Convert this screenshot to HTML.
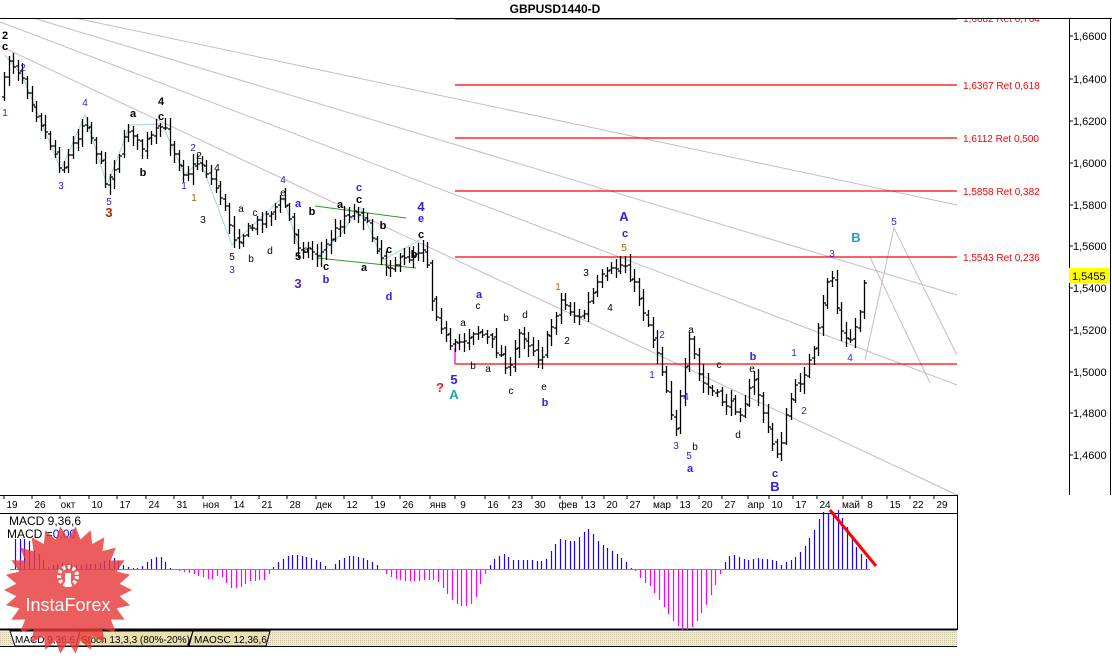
<!DOCTYPE html>
<html><head><meta charset="utf-8"><style>
html,body{margin:0;padding:0;background:#fff;width:1112px;height:661px;overflow:hidden}
svg{display:block;font-family:"Liberation Sans",sans-serif}
</style></head><body>
<svg id="s" width="1112" height="661" viewBox="0 0 1112 661" xmlns="http://www.w3.org/2000/svg">
<rect width="1112" height="661" fill="#fff"/>
<text x="555" y="13" font-size="12" font-weight="bold" text-anchor="middle">GBPUSD1440-D</text>
<line x1="0" y1="18.5" x2="1112" y2="18.5" stroke="#000"/>
<line x1="1110.5" y1="18" x2="1110.5" y2="495" stroke="#000"/>
<line x1="1069.5" y1="18" x2="1069.5" y2="495" stroke="#000"/>
<g stroke="#cbb8cb" stroke-width="1" fill="none">
<line x1="33" y1="18" x2="957" y2="295"/>
<line x1="0" y1="22" x2="957" y2="385"/>
<line x1="0" y1="46" x2="957" y2="495"/>
<line x1="75" y1="18" x2="957" y2="205"/>
<polyline points="865,360 894,228 957,355"/>
<line x1="870" y1="257" x2="930" y2="383"/>
</g>
<g stroke="#9fd6df" fill="none">
<polyline points="5,55 22,75 61,170 85,115 107,185 130,125 162,124 185,175 200,160 232,245 283,197 298,245"/>
<polyline points="316,258 340,235 360,207 383,260 420,240 421,238"/>
</g>
<g stroke="#2a9a2a" fill="none"><line x1="315" y1="206" x2="406" y2="218"/><line x1="317" y1="258" x2="416" y2="268"/></g>
<g stroke="#f00" stroke-width="1.3">
<line x1="455" y1="19" x2="957" y2="19"/><line x1="455" y1="85" x2="957" y2="85"/>
<line x1="455" y1="138" x2="957" y2="138"/><line x1="455" y1="191" x2="957" y2="191"/>
<line x1="455" y1="257" x2="957" y2="257"/><line x1="455" y1="364" x2="957" y2="364"/>
</g>
<line x1="455" y1="348" x2="455" y2="364" stroke="#e0e" stroke-width="1.3"/>
<g fill="#f00" font-size="10">
<text x="963" y="22">1,6682 Ret 0,764</text><text x="963" y="89">1,6367 Ret 0,618</text>
<text x="963" y="142">1,6112 Ret 0,500</text><text x="963" y="195">1,5858 Ret 0,382</text>
<text x="963" y="261">1,5543 Ret 0,236</text>
</g>
<rect x="0" y="18" width="1112" height="1" fill="#000"/>
<rect x="940" y="0" width="172" height="18" fill="#fff"/>
<g id="bars" stroke="#000" stroke-width="1.3" fill="none"></g>
<g font-size="10" text-anchor="middle">
<g fill="#000" font-weight="bold" font-size="11"><text x="5" y="39">2</text><text x="5" y="50">c</text><text x="133" y="117">a</text><text x="161" y="105">4</text><text x="161" y="120">c</text><text x="143" y="176">b</text><text x="359" y="203">c</text><text x="421" y="238">c</text><text x="414" y="258">b</text><text x="298" y="260">5</text><text x="312" y="215">b</text><text x="340" y="208">a</text><text x="383" y="229">b</text><text x="364" y="271">a</text><text x="389" y="253">c</text><text x="326" y="270">c</text></g>
<g fill="#000"><text x="217" y="171">4</text><text x="203" y="223">3</text><text x="241" y="212">a</text><text x="255" y="216">c</text><text x="283" y="196">e</text><text x="270" y="254">d</text><text x="232" y="260">5</text><text x="251" y="262">b</text><text x="306" y="253">a</text><text x="463" y="326">a</text><text x="478" y="309">c</text><text x="506" y="321">b</text><text x="525" y="318">d</text><text x="473" y="369">b</text><text x="488" y="372">a</text><text x="511" y="394">c</text><text x="544" y="390">e</text><text x="567" y="344">2</text><text x="610" y="311">4</text><text x="691" y="333">a</text><text x="695" y="450">b</text><text x="719" y="368">c</text><text x="752" y="372">e</text><text x="738" y="438">d</text><text x="199" y="159">2</text><text x="586" y="276">3</text></g>
<g fill="#b06000"><text x="194" y="201">1</text><text x="558" y="290">1</text><text x="624" y="251">5</text></g>
<g fill="#3020e0"><text x="5" y="116">1</text><text x="23" y="71">2</text><text x="85" y="106">4</text><text x="61" y="189">3</text><text x="109" y="205">5</text><text x="193" y="151">2</text><text x="184" y="189">1</text><text x="283" y="183">4</text><text x="232" y="273">3</text><text x="652" y="378">1</text><text x="662" y="338">2</text><text x="686" y="400">4</text><text x="676" y="449">3</text><text x="689" y="459">5</text><text x="794" y="356">1</text><text x="804" y="414">2</text><text x="832" y="257">3</text><text x="850" y="361">4</text><text x="894" y="225">5</text></g>
<g fill="#3020e0" font-weight="bold" font-size="11"><text x="298" y="207">a</text><text x="359" y="191">c</text><text x="326" y="283">b</text><text x="389" y="300">d</text><text x="421" y="222">e</text><text x="479" y="298">a</text><text x="545" y="406">b</text><text x="625" y="237">c</text><text x="690" y="472">a</text><text x="753" y="360">b</text><text x="775" y="477">c</text></g>
<g font-weight="bold" font-size="13"><text x="109" y="217" fill="#a03000">3</text><text x="298" y="288" fill="#6020a0">3</text><text x="421" y="211" fill="#3020e0">4</text><text x="454" y="384" fill="#3020e0">5</text><text x="440" y="392" fill="#e02020">?</text><text x="454" y="399" fill="#20a0c0">A</text><text x="624" y="221" fill="#3020e0">A</text><text x="775" y="491" fill="#3020e0">B</text><text x="856" y="242" fill="#20a0c0">B</text></g>
</g>
<g font-size="11" fill="#000">
<g stroke="#000"><line x1="1069" y1="36" x2="1073" y2="36"/><line x1="1069" y1="79" x2="1073" y2="79"/><line x1="1069" y1="121" x2="1073" y2="121"/><line x1="1069" y1="163" x2="1073" y2="163"/><line x1="1069" y1="205" x2="1073" y2="205"/><line x1="1069" y1="246" x2="1073" y2="246"/><line x1="1069" y1="288" x2="1073" y2="288"/><line x1="1069" y1="330" x2="1073" y2="330"/><line x1="1069" y1="372" x2="1073" y2="372"/><line x1="1069" y1="413" x2="1073" y2="413"/><line x1="1069" y1="455" x2="1073" y2="455"/></g>
<text x="1073" y="40">1,6600</text><text x="1073" y="83">1,6400</text><text x="1073" y="125">1,6200</text><text x="1073" y="167">1,6000</text><text x="1073" y="209">1,5800</text><text x="1073" y="250">1,5600</text><text x="1073" y="292">1,5400</text><text x="1073" y="334">1,5200</text><text x="1073" y="376">1,5000</text><text x="1073" y="417">1,4800</text><text x="1073" y="459">1,4600</text>
<rect x="1069" y="268" width="41" height="15" fill="#ff0"/><text x="1072" y="280">1,5455</text>
</g>
<line x1="0" y1="495.5" x2="957" y2="495.5" stroke="#000"/>
<line x1="957.5" y1="495" x2="957.5" y2="630" stroke="#000"/>
<g id="dates" font-size="10" fill="#000" text-anchor="middle"></g>
<line x1="0" y1="513.5" x2="957" y2="513.5" stroke="#000"/>
<line x1="0" y1="629.5" x2="957" y2="629.5" stroke="#000" stroke-width="2"/>
<line x1="10" y1="569.5" x2="870" y2="569.5" stroke="#9a7a9a"/>
<g id="macd" stroke-width="1.2"></g>
<line x1="830" y1="510" x2="876" y2="566" stroke="#f00" stroke-width="3"/>
<text x="9" y="525" font-size="12">MACD 9,36,6</text>
<text x="7" y="538" font-size="12">MACD =<tspan fill="#00f">0,00</tspan></text>
<defs><pattern id="h" width="2" height="2" patternUnits="userSpaceOnUse"><rect width="2" height="2" fill="#f0ecdc"/><rect width="1" height="1" fill="#c8c0a0"/></pattern></defs>
<rect x="0" y="631" width="957" height="15" fill="url(#h)"/>
<path d="M10,631 L15,646 L80,646 L80,631 Z" fill="#fff" stroke="#000"/>
<path d="M80,631 L76,646 L188,646 L193,631 Z" fill="#e8e0b0" stroke="#000"/>
<path d="M193,631 L189,646 L266,646 L270,631 Z" fill="#e8e0b0" stroke="#000"/>
<g font-size="10"><text x="15" y="643">MACD 9,36,6</text><text x="81" y="643">Stoch 13,3,3 (80%-20%)</text><text x="194" y="643">MAOSC 12,36,6</text></g>
<line x1="0" y1="646.5" x2="957" y2="646.5" stroke="#000"/>
<polygon id="star" fill="#e83a3a" opacity="0.82"/>
<g fill="#fff">
<circle cx="68" cy="576" r="9" fill="none" stroke="#fff" stroke-width="4" stroke-dasharray="3 2.2"/>
<rect x="65" y="573" width="6" height="14"/>
<text x="68" y="611" font-size="18" text-anchor="middle">InstaForex</text>
</g>
</svg>
<script>
var NS="http://www.w3.org/2000/svg";
function el(t,a,p){var e=document.createElementNS(NS,t);for(var k in a)e.setAttribute(k,a[k]);p.appendChild(e);return e;}
var pts=[],cx=68,cy=590,n=26;for(var i=0;i<n*2;i++){var r=i%2?52:64,a=i*Math.PI/n;pts.push((cx+r*Math.cos(a)).toFixed(1)+","+(cy+r*Math.sin(a)).toFixed(1));}
document.getElementById("star").setAttribute("points",pts.join(" "));
var d=[[12,"19"],[40,"26"],[68,"окт"],[97,"10"],[125,"17"],[154,"24"],[182,"31"],[211,"ноя"],[239,"14"],[267,"21"],[295,"28"],[324,"дек"],[352,"12"],[380,"19"],[408,"26"],[438,"янв"],[463,"9"],[493,"16"],[517,"23"],[540,"30"],[568,"фев"],[590,"13"],[612,"20"],[635,"27"],[662,"мар"],[685,"13"],[707,"20"],[730,"27"],[756,"апр"],[777,"10"],[801,"17"],[825,"24"],[851,"май"],[870,"8"],[895,"15"],[918,"22"],[942,"29"]];
var g=document.getElementById("dates");
d.forEach(function(v){var x=v[0]-8;el("line",{x1:x,y1:495,x2:x,y2:499,stroke:"#000"},g);var t=el("text",{x:v[0],y:508},g);t.textContent=v[1];});
var wp=[[3,95],[6,55],[22,75],[35,110],[62,170],[85,118],[107,185],[130,125],[140,150],[162,125],[185,175],[200,160],[220,195],[235,240],[255,225],[283,200],[297,245],[320,255],[345,215],[360,210],[385,265],[405,260],[425,245],[432,300],[450,350],[475,330],[490,340],[510,370],[520,330],[540,360],[560,300],[580,320],[600,280],[624,262],[640,300],[660,360],[675,430],[690,340],[700,380],[720,400],[740,410],[755,380],[770,440],[778,455],[790,400],[800,380],[815,350],[830,265],[840,330],[848,345],[858,320],[865,275]];
function interp(w,x){for(var i=1;i<w.length;i++){if(x<=w[i][0]){var a=w[i-1],b=w[i];return a[1]+(b[1]-a[1])*(x-a[0])/(b[0]-a[0]);}}return w[w.length-1][1];}
var seed=7;function rnd(){seed=(seed*16807)%2147483647;return seed/2147483647;}
var gb=document.getElementById("bars"),prev=interp(wp,3),s="";
for(var x=4;x<=866;x+=4.6){var c=interp(wp,x)+(rnd()-0.5)*10;var o=prev+(rnd()-0.5)*4;var hi=Math.min(o,c)-2-rnd()*9,lo=Math.max(o,c)+2+rnd()*9;var X=Math.round(x)+0.5;
s+="M"+X+","+hi.toFixed(0)+"V"+lo.toFixed(0)+"M"+(X-2.5)+","+o.toFixed(0)+"H"+X+"M"+X+","+c.toFixed(0)+"H"+(X+2.5);prev=c;}
el("path",{d:s},gb);
var mw=[[15,30],[28,30],[33,20],[40,14],[47,2],[60,6],[80,4],[100,6],[105,8],[115,11],[123,4],[130,1],[140,1],[150,10],[160,13],[170,1],[180,-1],[200,-6],[210,-10],[220,-5],[232,-19],[240,-17],[250,-11],[265,-10],[272,1],[280,9],[290,14],[305,13],[320,7],[330,0],[340,10],[350,13],[365,11],[378,3],[390,-7],[403,-11],[436,-10],[445,-21],[454,-33],[464,-37],[474,-32],[479,-17],[484,-6],[488,1],[494,10],[503,16],[512,9],[526,9],[540,8],[546,10],[555,25],[560,30],[573,27],[584,37],[589,40],[598,28],[607,21],[616,16],[626,7],[631,1],[636,-1],[641,-10],[650,-16],[659,-30],[670,-47],[679,-58],[688,-62],[697,-50],[706,-35],[717,-11],[722,1],[726,10],[732,15],[746,9],[757,11],[775,9],[780,4],[789,8],[795,12],[804,22],[813,37],[822,58],[827,54],[832,57],[838,59],[847,42],[856,22],[865,10],[870,8]];
var gm=document.getElementById("macd"),sp="",sn="";
for(var x=15;x<=870;x+=4.7){var v=interp(mw,x),X=Math.round(x)+0.5;if(Math.abs(v)<0.5)continue;if(v>0)sp+="M"+X+",569V"+(569-v).toFixed(0);else sn+="M"+X+",570V"+(570-v).toFixed(0);}
el("path",{d:sp,stroke:"#2000ff"},gm);el("path",{d:sn,stroke:"#ff00ff"},gm);
</script>
</body></html>
